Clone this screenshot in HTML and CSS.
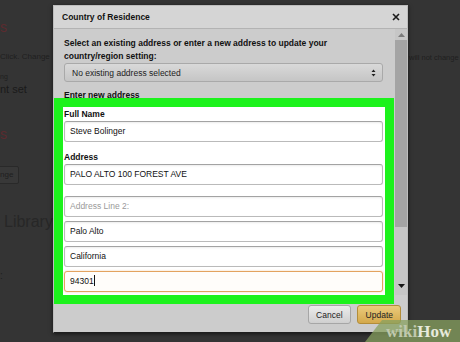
FILE: index.html
```html
<!DOCTYPE html>
<html lang="en">
<head>
    <meta charset="UTF-8">
    <meta name="viewport" content="width=device-width, initial-scale=1.0">
    <title>Country of Residence</title>
    <link rel="stylesheet" href="styles.css">
</head>
<body>
    <!-- dimmed settings page behind the dialog -->
    <div class="page">
        <div class="bg-left">
            <div class="bg-red bg-first">s</div>
            <div class="bg-small">Click. Change</div>
            <div class="bg-tiny">ng</div>
            <div class="bg-mid">nt set</div>
            <div class="bg-red bg-second">s</div>
            <div class="bg-btn-row"><span class="bg-btn">nge</span></div>
            <div class="bg-head">Library</div>
            <div class="bg-colon">:</div>
        </div>
        <div class="bg-right">will not change</div>
    </div>

    <div class="modal">
        <div class="modal-head">
            <span class="title">Country of Residence</span>
            <svg class="close" width="8" height="8" viewBox="0 0 8 8"><path d="M1 1L7 7M7 1L1 7" stroke="#1b1b1b" stroke-width="1.6"/></svg>
        </div>
        <div class="modal-body">
            <div class="scroll-content">
                <p class="intro">Select an existing address or enter a new address to update your<br>country/region setting:</p>
                <div class="select">
                    <span>No existing address selected</span>
                    <svg width="5" height="8" viewBox="0 0 5 8"><path d="M2.5 0.5L4.5 3H0.5Z M2.5 7.5L4.5 5H0.5Z" fill="#222"/></svg>
                </div>
                <p class="subhead">Enter new address</p>
                <div class="new-address">
                    <div class="label">Full Name</div>
                    <div class="field">Steve Bolinger</div>
                    <div class="label label-gap">Address</div>
                    <div class="field">PALO ALTO 100 FOREST AVE</div>
                    <div class="field placeholder line2">Address Line 2:</div>
                    <div class="field next">Palo Alto</div>
                    <div class="field next">California</div>
                    <div class="field next focus">94301<span class="caret"></span></div>
                </div>
            </div>
            <div class="scrollbar">
                <div class="arrow"><svg width="7" height="4" viewBox="0 0 7 4"><path d="M3.5 0L7 4H0Z" fill="#7a7a7a"/></svg></div>
                <div class="track"><div class="thumb"></div></div>
                <div class="arrow"><svg width="7" height="4" viewBox="0 0 7 4"><path d="M0 0H7L3.5 4Z" fill="#151515"/></svg></div>
            </div>
        </div>
        <div class="modal-foot">
            <button class="btn">Cancel</button>
            <button class="btn btn-primary">Update</button>
        </div>
    </div>

    <div class="watermark"><span class="wiki">wiki</span>How</div>
</body>
</html>
```

FILE: styles.css
```css
body {
    margin: 0;
    width: 460px;
    height: 342px;
    overflow: hidden;
    background-color: #343434;
    font-family: "Liberation Sans", Arial, sans-serif;
    position: relative;
}
.page {
    display: flex;
    height: 100%;
}
.bg-left {
    width: 60px;
    color: #1f1f1f;
    white-space: nowrap;
}
.bg-red {
    color: #5b2b2f;
    font-size: 14px;
    line-height: 16px;
}
.bg-first {
    padding-top: 19px;
}
.bg-small {
    font-size: 8px;
    line-height: 10px;
    margin-top: 17px;
}
.bg-tiny {
    font-size: 7px;
    line-height: 9px;
    margin-top: 10px;
}
.bg-mid {
    font-size: 11px;
    line-height: 13px;
    margin-top: 2px;
    color: #1a1a1a;
}
.bg-second {
    margin-top: 30px;
}
.bg-btn-row {
    margin-top: 21px;
    height: 18px;
}
.bg-btn {
    display: inline-block;
    height: 16px;
    line-height: 16px;
    font-size: 8px;
    padding: 0 5px 0 1px;
    margin-left: -2px;
    border: 1px solid #292929;
    border-radius: 2px;
    background: #383838;
}
.bg-head {
    font-size: 16px;
    line-height: 18px;
    margin-top: 32px;
    padding-left: 4px;
    color: #272727;
}
.bg-colon {
    font-size: 10px;
    line-height: 12px;
    margin-top: 39px;
}
.bg-right {
    margin-left: auto;
    width: 51px;
    padding-top: 53px;
    font-size: 7.5px;
    line-height: 10px;
    color: #1f1f1f;
    white-space: nowrap;
}

/* dialog */
.modal {
    position: absolute;
    left: 53px;
    top: 5px;
    width: 355px;
    height: 328px;
    box-sizing: border-box;
    border: 1px solid #bdbdbd;
    border-bottom-color: #1e1e1e;
    box-shadow: 0 1px 4px rgba(0, 0, 0, 0.6);
    background: #cccccc;
    color: #111;
    font-size: 8.5px;
}
.modal-head {
    height: 22px;
    display: flex;
    align-items: center;
    justify-content: space-between;
    padding: 0 7px 0 8px;
    background: #d5d5d5;
    border-bottom: 1px solid #b3b3b3;
}
.title {
    font-weight: bold;
}
.modal-body {
    display: flex;
    height: 266px;
}
.scroll-content {
    flex: 1;
    padding: 8px 12px 0 10px;
}
.intro {
    margin: 0;
    font-weight: bold;
    line-height: 13px;
}
.select {
    height: 19px;
    box-sizing: border-box;
    display: flex;
    align-items: center;
    justify-content: space-between;
    padding: 0 6px 0 7px;
    border: 1px solid #a9a9a9;
    border-radius: 3px;
    background: linear-gradient(#d9d9d9, #c5c5c5);
    color: #222;
}
.subhead {
    margin: 7px 0 5px;
    font-weight: bold;
    line-height: 13px;
}
.new-address {
    background: #fff;
    margin: 0 -2px 0 -1px;
    padding: 1px 2px 3px 1px;
    outline: 9px solid #1cf21c;
}
.label {
    font-weight: bold;
    line-height: 13px;
}
.label-gap {
    margin-top: 9px;
}
.field {
    height: 21px;
    box-sizing: border-box;
    line-height: 19px;
    padding: 0 5px;
    border: 1px solid #bababa;
    border-top-color: #a3a3a3;
    border-radius: 3px;
    box-shadow: inset 0 1px 2px rgba(0, 0, 0, 0.08);
    color: #111;
}
.placeholder {
    color: #9a9a9a;
}
.line2 {
    margin-top: 11px;
}
.next {
    margin-top: 4px;
}
.focus {
    border-color: #e3a35f;
    background: #fffdfa;
    box-shadow: 0 0 2px rgba(228, 160, 90, 0.5);
}
.caret {
    display: inline-block;
    width: 1px;
    height: 11px;
    background: #111;
    vertical-align: -2px;
}
.scrollbar {
    width: 12px;
    display: flex;
    flex-direction: column;
    background: #c6c6c6;
    padding-bottom: 4px;
}
.arrow {
    height: 11px;
    display: flex;
    align-items: center;
    justify-content: center;
}
.track {
    flex: 1;
}
.thumb {
    height: 187px;
    background: #a4a4a4;
}
.modal-foot {
    display: flex;
    justify-content: flex-end;
    gap: 6px;
    padding: 10px 6px 0 0;
}
.btn {
    height: 19px;
    padding: 0 7px;
    font-family: "Liberation Sans", Arial, sans-serif;
    font-size: 8.5px;
    color: #222;
    border: 1px solid #a6a6a6;
    border-radius: 3px;
    background: linear-gradient(#ececec, #cfcfcf);
}
.btn-primary {
    padding: 0 7px 0 8px;
    border-color: #b38d3a;
    background: linear-gradient(#ebcb7c, #d4a94c);
}

/* site watermark */
.watermark {
    position: absolute;
    right: 0;
    bottom: 0;
    width: 95px;
    height: 22px;
    box-sizing: border-box;
    padding: 2px 0 0 21px;
    background: rgba(135, 160, 95, 0.75);
    clip-path: polygon(17px 0, 100% 0, 100% 100%, 0 100%);
    font-family: "Liberation Serif", serif;
    font-weight: bold;
    font-size: 17px;
    line-height: 20px;
    color: #e6eadc;
}
.wiki {
    color: #bfc8ad;
}
```
